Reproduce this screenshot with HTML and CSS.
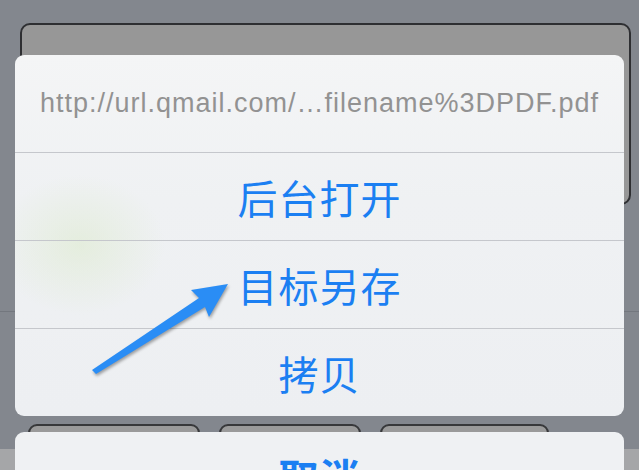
FILE: index.html
```html
<!DOCTYPE html>
<html lang="zh-CN">
<head>
<meta charset="utf-8">
<title>Action sheet</title>
<link rel="stylesheet" href="styles.css">
</head>
<body>
<div class="page">
  <div class="panel"></div>
  <div class="sep"></div>
  <div class="toolbar">
    <div class="tb-btn tb-1"></div>
    <div class="tb-btn tb-2"></div>
    <div class="tb-btn tb-3"></div>
  </div>
  <div class="band"></div>
</div>

<div class="sheet">
  <div class="group main-group">
    <div class="row row-url">http://url.qmail.com/…filename%3DPDF.pdf</div>
    <div class="row row-action">后台打开</div>
    <div class="row row-action">目标另存</div>
    <div class="row row-action">拷贝</div>
  </div>
  <div class="group cancel-group">
    <div class="row row-cancel">取消</div>
  </div>
</div>

<svg class="arrow" width="639" height="470" viewBox="0 0 639 470" aria-hidden="true">
  <polygon points="92,370 199,298 191,290 228,284 209,317 205,307 96,374" fill="#2a8df5"/>
</svg>
</body>
</html>
```

FILE: styles.css
```css
html, body {
  margin: 0;
  padding: 0;
}

body {
  width: 639px;
  height: 470px;
  overflow: hidden;
  position: relative;
  background: #83878e;
  font-family: "Liberation Sans", "Noto Sans CJK SC", sans-serif;
}

.page {
  padding-top: 23px;
  display: flex;
  flex-direction: column;
}

.panel {
  margin-left: 20px;
  width: 611px;
  height: 182px;
  box-sizing: border-box;
  border: 2px solid #2e2f32;
  border-radius: 10px;
  background: #979797;
}

.sep {
  margin-top: 106px;
  height: 1px;
  background: #73777e;
}

.toolbar {
  margin-top: 112px;
  height: 25px;
  display: flex;
  padding-left: 28px;
  gap: 19px;
}

.tb-btn {
  height: 40px;
  box-sizing: border-box;
  border: 2px solid #37383a;
  border-radius: 9px;
  background: #9a9a9a;
}

.tb-1 { width: 172px; }
.tb-2 { width: 142px; }
.tb-3 { width: 169px; }

.band {
  height: 30px;
  background: #a5a6a8;
}

.sheet {
  position: absolute;
  left: 15px;
  top: 55px;
  width: 609px;
  display: flex;
  flex-direction: column;
  gap: 16px;
}

.group {
  border-radius: 9px;
  overflow: hidden;
  background: #eef0f3;
}

.main-group {
  background:
    radial-gradient(ellipse 85px 70px at 65px 190px, rgba(220, 234, 204, 0.55), rgba(220, 234, 204, 0) 100%),
    linear-gradient(#f4f5f6, #eff1f3 40%, #edeff2);
}

.row {
  display: flex;
  align-items: center;
  justify-content: center;
  height: 87px;
  border-top: 1px solid #c5c7cc;
}

.row-url {
  height: 97px;
  border-top: none;
  font-size: 27px;
  color: #929292;
  letter-spacing: 1px;
}

.row-action {
  font-family: "Noto Sans CJK SC", sans-serif;
  font-size: 40px;
  color: #1b7ff2;
  letter-spacing: 1px;
}

.cancel-group {
  background: #eff1f3;
}

.row-cancel {
  height: 88px;
  border-top: none;
  font-family: "Noto Sans CJK SC", sans-serif;
  font-size: 40px;
  font-weight: 700;
  color: #1b7ff2;
  letter-spacing: 1px;
}

.arrow {
  position: absolute;
  left: 0;
  top: 0;
  filter: drop-shadow(1px 2px 1.5px rgba(0, 0, 0, 0.35));
}
```
